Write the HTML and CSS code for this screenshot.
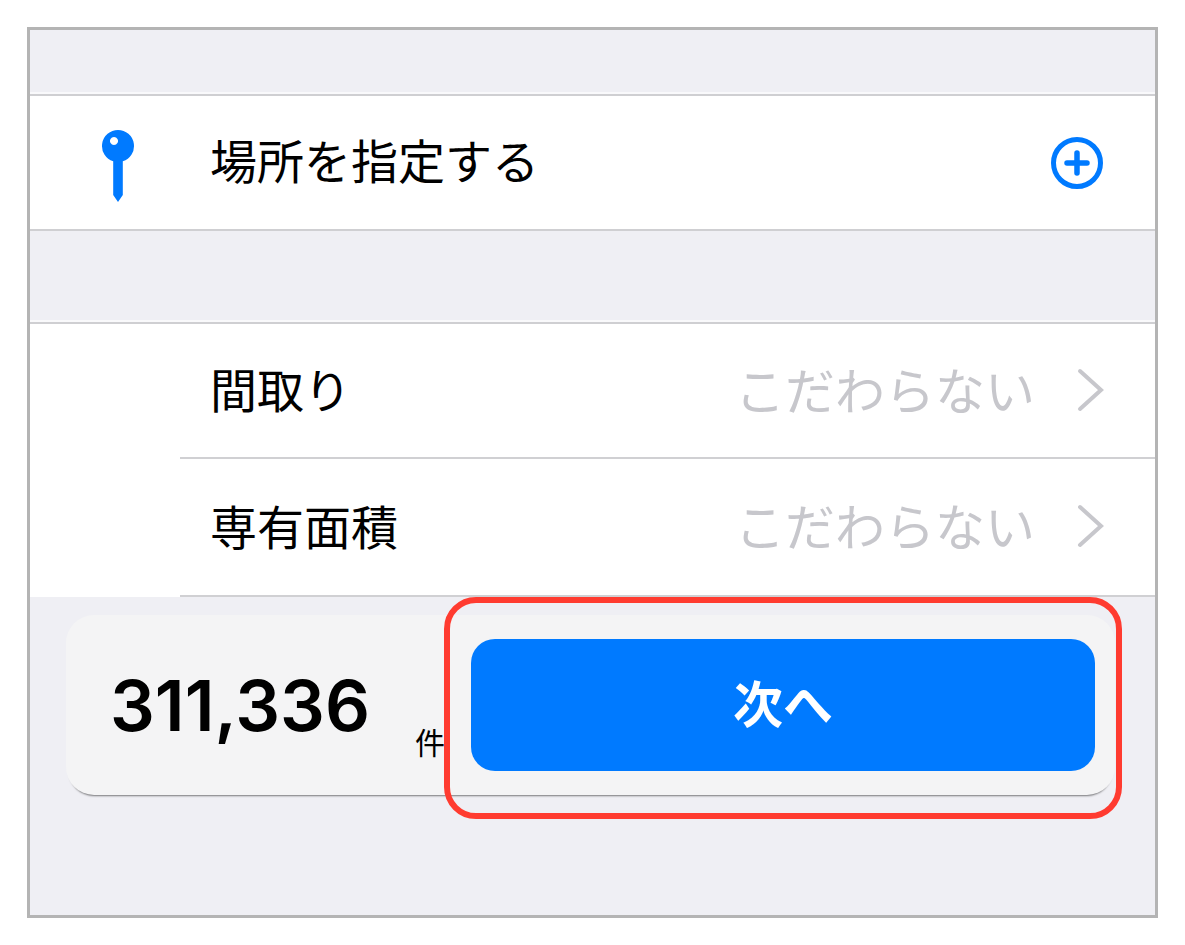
FILE: index.html
```html
<!DOCTYPE html>
<html lang="ja">
<head>
    <meta charset="UTF-8">
    <title>条件を指定</title>
    <link rel="stylesheet" href="styles.css">
</head>
<body>

<div class="frame">
    <div class="group group-location">
        <div class="row row-location">
            <svg class="pin" width="34" height="72" viewBox="0 0 34 72">
                <path fill="#007aff" fill-rule="evenodd" d="M17 0a16 16 0 0 1 4.800 31.260V65l-4.800 7-4.800-7V31.260A16 16 0 0 1 17 0zm-4 7a4 4 0 1 0 .01 0z"/>
            </svg>
            <span class="label">場所を指定する</span>
            <svg class="plus" width="52" height="52" viewBox="0 0 52 52">
                <circle cx="26" cy="26" r="23.500" fill="none" stroke="#007aff" stroke-width="5"/>
                <path d="M26 16v20M16 26h20" stroke="#007aff" stroke-width="5.500" stroke-linecap="round"/>
            </svg>
        </div>
    </div>

    <div class="group group-filters">
        <div class="row row-filter row-first">
            <span class="label">間取り</span>
            <span class="value">こだわらない</span>
            <svg class="chevron" width="28" height="44" viewBox="0 0 28 44">
                <path d="M3 3l21 19L3 41" fill="none" stroke="#c7c7cc" stroke-width="4" stroke-linecap="round" stroke-linejoin="miter"/>
            </svg>
        </div>
        <div class="row row-filter">
            <span class="label">専有面積</span>
            <span class="value">こだわらない</span>
            <svg class="chevron" width="28" height="44" viewBox="0 0 28 44">
                <path d="M3 3l21 19L3 41" fill="none" stroke="#c7c7cc" stroke-width="4" stroke-linecap="round" stroke-linejoin="miter"/>
            </svg>
        </div>
    </div>

    <div class="footer-card">
        <span class="count">311,336</span>
        <span class="unit">件</span>
        <button class="next">次へ</button>
    </div>

    <div class="highlight"></div>
</div>

</body>
</html>
```

FILE: styles.css
```css
* {
    box-sizing: border-box;
}

body {
    margin: 0;
    background: #fff;
    font-family: "Noto Sans CJK JP", sans-serif;
}

.frame {
    position: relative;
    width: 1131px;
    height: 891px;
    margin: 27px 0 0 27px;
    border: 3px solid #b4b4b4;
    background: #efeff4;
    overflow: hidden;
}

.group {
    background: #fff;
    border-top: 2px solid #cfcfd2;
    box-shadow: 0 -2px 0 #f9f9fb;
}

.group-location {
    margin-top: 64px;
    border-bottom: 2px solid #cfcfd2;
}

.group-filters {
    margin-top: 91px;
}

.row {
    display: flex;
    align-items: center;
}

.row-location {
    height: 133px;
    padding-left: 71px;
}

.pin {
    margin-top: 6px;
    margin-right: 75px;
}

.plus {
    margin-left: auto;
    margin-right: 52px;
}

.label {
    font-size: 47px;
    color: #000;
    line-height: 1;
    margin-bottom: 8px;
}

.row-filter {
    height: 138px;
    margin-left: 150px;
    padding-left: 30px;
    padding-right: 50px;
    border-bottom: 2px solid #d0d0d3;
}

.row-filter .label {
    margin-bottom: 6px;
}

.row-first {
    height: 135px;
}

.value {
    margin-left: auto;
    margin-bottom: 6px;
    font-size: 50px;
    font-weight: 400;
    line-height: 1;
    color: #c7c7cc;
}

.chevron {
    margin-left: 42px;
    margin-bottom: 2px;
}

.footer-card {
    display: flex;
    align-items: center;
    height: 180px;
    margin: 18px 40px 0 36px;
    padding: 0 20px 0 44px;
    background: #f4f4f5;
    border-radius: 28px;
    box-shadow: 0 4px 2px -3px rgba(0, 0, 0, 0.5);
}

.count {
    font-family: Inter, sans-serif;
    font-size: 70.500px;
    font-weight: 600;
    color: #000;
    line-height: 1;
    margin-top: 2px;
}

.unit {
    width: 56px;
    margin-left: 45px;
    margin-top: 72px;
    font-size: 30px;
    line-height: 1;
    color: #000;
}

.next {
    width: 624px;
    height: 132px;
    padding-bottom: 10px;
    border: 0;
    border-radius: 24px;
    background: #007aff;
    color: #fff;
    font-family: inherit;
    font-size: 50px;
    font-weight: 700;
}

/* Markierung um den Button */
.highlight {
    position: absolute;
    left: 414px;
    top: 567px;
    width: 678px;
    height: 222px;
    border: 6px solid #ff3b30;
    border-radius: 32px;
}
```
